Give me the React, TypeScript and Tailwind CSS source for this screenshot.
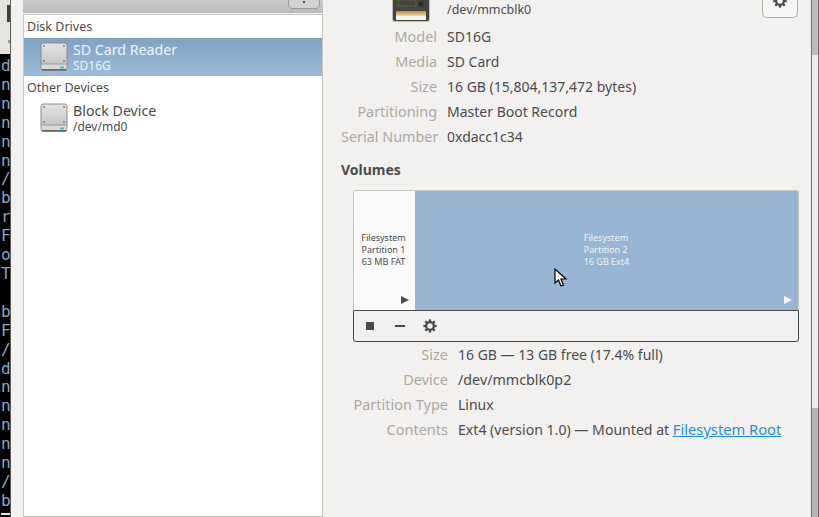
import React from 'react';

const termChars = ['d', 'n', 'n', 'n', 'n', 'n', '/', 'b', 'r', 'F', 'o', 'T', '\u00a0', 'b', 'F', '/', 'd', 'n', 'n', 'n', 'n', 'n', '/', 'b'];

const deviceRows = [
  { label: 'Model', value: 'SD16G' },
  { label: 'Media', value: 'SD Card' },
  { label: 'Size', value: '16 GB (15,804,137,472 bytes)' },
  { label: 'Partitioning', value: 'Master Boot Record' },
  { label: 'Serial Number', value: '0xdacc1c34' },
];

const Gear = ({ size = 14, color = '#4a4a4a' }: { size?: number; color?: string }) => (
  <svg width={size} height={size} viewBox="0 0 16 16" className="shrink-0">
    <circle cx="8" cy="8" r="4.4" fill="none" stroke={color} strokeWidth="2.6" />
    {[0, 45, 90, 135, 180, 225, 270, 315].map((a) => (
      <rect key={a} x="6.7" y="0.4" width="2.6" height="3" fill={color} transform={`rotate(${a} 8 8)`} />
    ))}
  </svg>
);

const DriveIcon = () => (
  <svg width="28" height="30" viewBox="0 0 28 30" className="shrink-0">
    <defs>
      <linearGradient id="driveBody" x1="0" y1="0" x2="0" y2="1">
        <stop offset="0" stopColor="#e4e4e2" />
        <stop offset="1" stopColor="#bdbdbb" />
      </linearGradient>
    </defs>
    <rect x="1" y="1" width="26" height="27.5" rx="2.5" fill="url(#driveBody)" stroke="#8b8b89" />
    <rect x="1.5" y="22" width="25" height="6" rx="1" fill="#d9d9d7" />
    <rect x="1.5" y="21.5" width="25" height="1" fill="#9a9a98" />
    <rect x="1.5" y="27" width="25" height="1.5" fill="#6b6b69" />
    <rect x="20" y="24.5" width="4" height="2" fill="#35c8d0" />
    {[[4, 4], [24, 4], [4, 19], [24, 19]].map(([x, y]) => (
      <circle key={`${x}-${y}`} cx={x} cy={y} r="1" fill="#80807e" />
    ))}
  </svg>
);

const CardIcon = () => (
  <svg width="40" height="23" viewBox="0 0 40 23" className="shrink-0">
    <defs>
      <linearGradient id="cardLabel" x1="0" y1="0" x2="0" y2="1">
        <stop offset="0" stopColor="#b88a3c" />
        <stop offset="1" stopColor="#f3d9a2" />
      </linearGradient>
    </defs>
    <rect x="1" y="-6" width="38" height="28" rx="2" fill="#8f8f8c" opacity="0.5" />
    <rect x="2" y="-6" width="36" height="27" rx="2" fill="#44443f" />
    <rect x="7" y="0" width="18" height="6" fill="none" stroke="#5b5b56" />
    <circle cx="30" cy="4" r="2.5" fill="#2a2a27" />
    <rect x="5" y="11" width="30" height="5" fill="url(#cardLabel)" />
    <rect x="5" y="16" width="30" height="4" fill="#f4f3ee" />
  </svg>
);

const App = () => {
  return (
    <div className="relative flex h-[517px] w-[819px] overflow-hidden bg-[#f2f1f0] text-[#4c4c4c] [font-family:'Noto_Sans',sans-serif]">
      {/* terminal window peeking out on the left */}
      <div className="flex h-full w-[11px] shrink-0 flex-col overflow-hidden border-r border-[#5a5a5a] bg-black">
        <div className="h-[54px] shrink-0 bg-[#e4e4df] pt-[5px]">
          <div className="ml-[7px] h-[17px] w-[3px] bg-[#37433a]" />
          <div className="ml-[8px] mt-[18px] h-[3px] w-[2px] bg-[#b09a70]" />
        </div>
        <div className="flex flex-col pt-[3px] pl-[1px] text-[16px] leading-[18.9px] text-[#86a6c4] [font-family:'DejaVu_Sans_Mono',monospace]">
          {termChars.map((c, i) => (
            <span key={i}>{c}</span>
          ))}
        </div>
        <div className="ml-[1px] mt-[2px] h-[2px] w-[9px] shrink-0 bg-[#e4e4e4]" />
      </div>

      {/* sidebar */}
      <div className="ml-[12px] flex h-full w-[300px] shrink-0 flex-col">
        <div className="relative flex h-[13px] shrink-0 items-end justify-center overflow-hidden bg-gradient-to-b from-[#cbcbcb] to-[#bbbbbb]">
          <span className="mb-[10px] text-[15px] leading-[20px] font-bold text-[#f4f4f4]">Devices</span>
          <div className="absolute right-[3px] bottom-[4px] flex h-[20px] w-[32px] items-end justify-center rounded-b-[4px] border border-[#9a9a9a] bg-[#d2d2d2] pb-[5px]">
            <div className="h-[2px] w-[2px] bg-[#4a4a4a]" />
          </div>
        </div>
        <div className="mt-[1px] min-h-0 flex-1 border border-[#c6c6c1] bg-white">
          <div className="flex h-[23px] items-center pl-[3px] pt-[2px] text-[12.5px]">Disk Drives</div>
          <div className="flex h-[38px] items-center gap-[5px] bg-gradient-to-b from-[#7fa2c3] to-[#9dbcd9] pl-[16px] text-[#eef3f8]">
            <DriveIcon />
            <div className="flex flex-col">
              <span className="text-[14.2px] leading-[17px]">SD Card Reader</span>
              <span className="text-[12px] leading-[15px]">SD16G</span>
            </div>
          </div>
          <div className="flex h-[23px] items-center pl-[3px] pt-[2px] text-[12.5px]">Other Devices</div>
          <div className="flex h-[38px] items-center gap-[5px] pl-[16px]">
            <DriveIcon />
            <div className="flex flex-col">
              <span className="text-[14.2px] leading-[17px]">Block Device</span>
              <span className="text-[12px] leading-[15px]">/dev/md0</span>
            </div>
          </div>
        </div>
      </div>

      {/* detail pane */}
      <div className="flex h-full min-w-0 flex-1 flex-col pl-[18px]">
        <div className="flex h-[24px] shrink-0">
          <div className="flex w-[96px] justify-end">
            <div className="mr-[6px]">
              <CardIcon />
            </div>
          </div>
          <span className="ml-[10px] mt-[1px] text-[12.5px] leading-[17px]">/dev/mmcblk0</span>
          <div className="ml-auto mr-[13px] flex h-[18px] w-[36px] items-start justify-center overflow-hidden rounded-b-[5px] border border-t-0 border-[#b0aea9] bg-[#f6f5f4]">
            <div className="-mt-[6px]">
              <Gear size={14} />
            </div>
          </div>
        </div>
        <div className="grid grid-cols-[96px_1fr] gap-x-[10px]">
          {deviceRows.map((row) => (
            <React.Fragment key={row.label}>
              <div className="text-right text-[14.4px] leading-[25px] whitespace-nowrap text-[#aea8a1]">{row.label}</div>
              <div className="text-[14px] leading-[25px]">{row.value}</div>
            </React.Fragment>
          ))}
        </div>
        <div className="mt-[11px] text-[14px] leading-[20px] font-bold">Volumes</div>

        <div className="ml-[12px] mt-[10px] w-[446px] shrink-0">
          <div className="flex h-[120px] overflow-hidden rounded-t-[3px] border border-b-0 border-[#c6c6c1]">
            <div className="relative flex w-[61px] shrink-0 flex-col items-center justify-center bg-[#fafafa] pr-[2px] pb-[2px] text-center text-[9px] leading-[12px]">
              <span>Filesystem</span>
              <span>Partition 1</span>
              <span>63 MB FAT</span>
              <svg width="8" height="8" viewBox="0 0 8 8" className="absolute right-[6px] bottom-[6px]">
                <path d="M0 0 L8 4 L0 8 Z" fill="#4a4a4a" />
              </svg>
            </div>
            <div className="relative flex flex-1 items-center justify-center bg-[#98b6d3] pb-[2px] text-[9px] leading-[12px] text-[#eef3f8]">
              <div className="flex flex-col">
                <span>Filesystem</span>
                <span>Partition 2</span>
                <span>16 GB Ext4</span>
              </div>
              <svg width="8" height="8" viewBox="0 0 8 8" className="absolute right-[6px] bottom-[6px]">
                <path d="M0 0 L8 4 L0 8 Z" fill="#f4f7fa" />
              </svg>
            </div>
          </div>
          <div className="flex h-[32px] items-center rounded-b-[3px] border border-[#4a4a4a] pl-[12px]">
            <div className="h-[8px] w-[8px] bg-[#4a4a4a]" />
            <div className="ml-[21px] h-[2px] w-[10px] bg-[#4a4a4a]" />
            <div className="ml-[18px]">
              <Gear size={14} />
            </div>
          </div>
        </div>

        <div className="grid grid-cols-[107px_1fr] gap-x-[10px]">
          <div className="text-right text-[14.5px] leading-[25px] whitespace-nowrap text-[#aea8a1]">Size</div>
          <div className="text-[14px] leading-[25px]">16 GB — 13 GB free (17.4% full)</div>
          <div className="text-right text-[14.5px] leading-[25px] whitespace-nowrap text-[#aea8a1]">Device</div>
          <div className="text-[14.3px] leading-[25px]">/dev/mmcblk0p2</div>
          <div className="text-right text-[14.5px] leading-[25px] whitespace-nowrap text-[#aea8a1]">Partition Type</div>
          <div className="text-[14px] leading-[25px]">Linux</div>
          <div className="text-right text-[14.5px] leading-[25px] whitespace-nowrap text-[#aea8a1]">Contents</div>
          <div className="text-[14.1px] leading-[25px] whitespace-nowrap">
            Ext4 (version 1.0) — Mounted at <span className="text-[14.7px] text-[#1c8fdf] underline">Filesystem Root</span>
          </div>
        </div>
      </div>

      {/* overlay scrollbar */}
      <div className="flex h-full w-[8px] shrink-0 flex-col border-x border-[#6e6e6e]">
        <div className="h-[55px] bg-[#bdbdbd]" />
        <div className="h-[353px] bg-[#eeedec]" />
        <div className="flex-1 bg-[#b4b4b4]" />
      </div>

      {/* mouse pointer */}
      <svg width="14" height="20" viewBox="0 0 14 20" className="absolute left-[554px] top-[268px]">
        <path d="M1 1 L1 15 L4.5 12 L7 18 L9.5 17 L7 11 L12 11 Z" fill="#fff" stroke="#000" strokeWidth="1.2" />
      </svg>
    </div>
  );
};

export default App;
